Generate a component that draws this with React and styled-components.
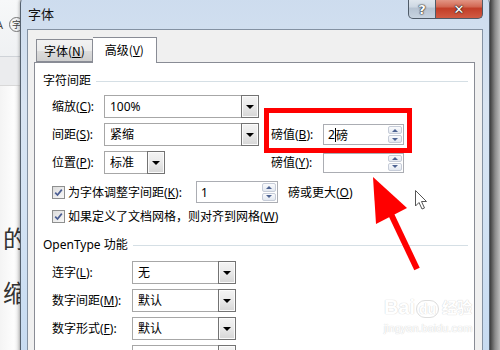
import styled, { createGlobalStyle } from "styled-components";

const GlobalStyle = createGlobalStyle`
  html, body { margin: 0; padding: 0; }
  body {
    width: 500px;
    height: 350px;
    overflow: hidden;
    background: #fff;
    font-family: "Noto Sans", "Noto Sans CJK SC", sans-serif;
    font-size: 12px;
    color: #000;
  }
`;

const Screen = styled.div`
  position: relative;
  display: flex;
  width: 500px;
  height: 350px;
  overflow: hidden;
`;

/* document behind the dialog */
const DocEdge = styled.div`
  width: 20px;
  flex: none;
  display: flex;
  flex-direction: column;
  background: #fafafa;
  overflow: hidden;
`;

const Ribbon = styled.div`
  height: 57px;
  flex: none;
  box-sizing: border-box;
  background: linear-gradient(#f7f8f9, #eff1f3);
  border-bottom: 1px solid #cfd3d8;
  display: flex;
  align-items: center;
  gap: 6px;
  padding: 0 0 8px 0;
  color: #444;
`;

const RibbonA = styled.span`
  margin-left: -4px;
  font-size: 11px;
`;

const RibbonCircle = styled.span`
  width: 13px;
  height: 13px;
  flex: none;
  border: 1px solid #777;
  border-radius: 50%;
  font-size: 9px;
  line-height: 13px;
  text-align: center;
`;

const RibbonBand = styled.div`
  height: 28px;
  flex: none;
  background: #ebecee;
  border-bottom: 1px solid #d8d8d8;
`;

const DocBody = styled.div`
  flex: 1;
  padding-top: 140px;
  display: flex;
  flex-direction: column;
  gap: 30px;
  background: linear-gradient(90deg, #f4f4f4, #fdfdfd 70%, #e6e6e6);
`;

const DocGlyph = styled.span`
  margin-left: 3px;
  font-family: "Noto Sans CJK SC", sans-serif;
  font-size: 24px;
  line-height: 24px;
  color: #333;
  white-space: nowrap;
`;

/* dialog window */
const Dialog = styled.div`
  width: 470px;
  flex: none;
  box-sizing: border-box;
  margin-top: -4px;
  height: 360px;
  display: flex;
  flex-direction: column;
  padding: 0 6px;
  border: 1px solid #55616f;
  border-radius: 7px 7px 0 0;
  background: linear-gradient(180deg, #cddcee 0%, #d8e4f2 30%, #d3e3f4 60%, #c7dbf1 100%);
  box-shadow: -1px 0 3px rgba(0, 0, 0, 0.25);
`;

const TitleBar = styled.div`
  height: 32px;
  flex: none;
  display: flex;
  align-items: flex-start;
`;

const Title = styled.span`
  margin: 9px 0 0 1px;
  font-family: "Noto Sans CJK SC", sans-serif;
  font-size: 13px;
  line-height: 16px;
  color: #111;
`;

const CaptionButtons = styled.div`
  margin-left: auto;
  display: flex;
`;

const CaptionBtn = styled.div`
  width: ${(p) => p.$w}px;
  height: 22px;
  box-sizing: border-box;
  border: 1px solid #4f5b68;
  border-top: none;
  display: flex;
  align-items: center;
  justify-content: center;
  padding-top: 3px;
  color: #fff;
  font-family: "DejaVu Sans", sans-serif;
  font-weight: bold;
  font-size: ${(p) => p.$fs}px;
  text-shadow: 0 0 1px #222, 0 0 1px #222, 0 0 2px #333;
  background: ${(p) =>
    p.$close
      ? "linear-gradient(#e9a99a 0%, #d36a55 45%, #c23e28 55%, #d15b43 100%)"
      : "linear-gradient(#e6ecf2 0%, #cfd9e4 45%, #b6c3d2 55%, #c7d3e0 100%)"};
  border-radius: ${(p) => (p.$close ? "0 0 5px 0" : "0 0 0 5px")};
  border-left: ${(p) => (p.$close ? "none" : "1px solid #4f5b68")};
`;

const Client = styled.div`
  flex: 1;
  display: flex;
  flex-direction: column;
  background: #f0f0f0;
  border: 1px solid #8391a2;
  border-bottom: none;
  padding: 8px 7px 0 6px;
  min-height: 0;
`;

const TabRow = styled.div`
  display: flex;
  align-items: flex-end;
  padding-left: 2px;
  height: 24px;
  flex: none;
`;

const Tab = styled.div`
  box-sizing: border-box;
  height: ${(p) => (p.$active ? 26 : 23)}px;
  padding: 0 ${(p) => (p.$active ? 12 : 7)}px;
  margin-bottom: ${(p) => (p.$active ? -1 : 0)}px;
  border: 1px solid #898c95;
  border-bottom: ${(p) => (p.$active ? "none" : "1px solid #898c95")};
  border-left: ${(p) => (p.$active ? "none" : "1px solid #898c95")};
  background: ${(p) =>
    p.$active ? "#fff" : "linear-gradient(#f2f2f2 0%, #ebebeb 50%, #dddddd 51%, #cfcfcf 100%)"};
  font-family: "Noto Sans CJK SC", sans-serif;
  font-size: 12px;
  line-height: ${(p) => (p.$active ? 24 : 21)}px;
  position: relative;
  z-index: ${(p) => (p.$active ? 1 : 0)};
`;

const Panel = styled.div`
  flex: 1;
  background: #fff;
  border: 1px solid #898c95;
  border-bottom: none;
  padding: 10px 6px 0 8px;
`;

const GroupHead = styled.div`
  display: flex;
  align-items: center;
  gap: 5px;
  line-height: 16px;
  margin-top: ${(p) => p.$mt || 0}px;
  &::after {
    content: "";
    flex: 1;
    height: 1px;
    background: #d5dfe5;
  }
`;

const GroupBody = styled.div`
  padding-left: 9px;
`;

const FieldGrid = styled.div`
  display: grid;
  grid-template-columns: ${(p) => p.$cols};
  grid-auto-rows: 23px;
  row-gap: 5px;
  align-items: center;
  margin-top: ${(p) => p.$mt}px;
`;

const Label = styled.span`
  white-space: nowrap;
  line-height: 16px;
  grid-column: ${(p) => p.$col || "auto"};
`;

const Combo = styled.div`
  width: ${(p) => p.$w}px;
  height: 23px;
  box-sizing: border-box;
  display: flex;
  border: 1px solid #a7a7a7;
  background: #fff;
`;

const ComboValue = styled.span`
  flex: 1;
  padding-left: 5px;
  line-height: 21px;
  white-space: nowrap;
`;

const DropBtn = styled.span`
  width: 18px;
  box-sizing: border-box;
  margin: -1px -1px -1px 0;
  border: 1px solid #737373;
  box-shadow: inset 0 0 0 1px #fbfbfb;
  background: linear-gradient(#f4f4f4 0%, #e9e9e9 50%, #d6d6d6 100%);
  display: flex;
  align-items: center;
  justify-content: center;
  &::after {
    content: "";
    border-left: 4px solid transparent;
    border-right: 4px solid transparent;
    border-top: 4px solid #000;
    margin-top: 1px;
  }
`;

const Spin = styled.div`
  width: ${(p) => p.$w}px;
  height: ${(p) => p.$h}px;
  box-sizing: border-box;
  border: 1px solid #abadb3;
  background: #fff;
  display: flex;
  align-items: stretch;
  padding: 1px 1px 1px 4px;
  grid-column: ${(p) => p.$col || "auto"};
`;

const SpinValue = styled.span`
  flex: 1;
  display: flex;
  align-items: center;
  white-space: nowrap;
`;

const Caret = styled.span`
  width: 1px;
  height: 14px;
  background: #000;
`;

const SpinButtons = styled.div`
  width: 14px;
  display: flex;
  flex-direction: column;
  gap: 1px;
`;

const SpinBtn = styled.span`
  flex: 1;
  border: 1px solid #c6ccd8;
  border-radius: 2px;
  background: linear-gradient(#fafbfd, #e3e8f0);
  display: flex;
  align-items: center;
  justify-content: center;
  &::after {
    content: "";
    border-left: 3px solid transparent;
    border-right: 3px solid transparent;
    ${(p) => (p.$down ? "border-top: 3px solid #4d6392;" : "border-bottom: 3px solid #4d6392;")}
  }
`;

const CheckRow = styled.div`
  display: flex;
  align-items: center;
  height: ${(p) => p.$h}px;
  margin-top: ${(p) => p.$mt}px;
`;

const CheckBox = styled.span`
  width: 13px;
  height: 13px;
  flex: none;
  box-sizing: border-box;
  border: 1px solid #8e8f8f;
  background: linear-gradient(135deg, #dcdcdc, #f8f8f8);
  display: flex;
  align-items: center;
  justify-content: center;
  margin-right: 3px;
`;

const CheckLabel = styled.span`
  white-space: nowrap;
  width: ${(p) => (p.$w ? `${p.$w}px` : "auto")};
`;

const Suffix = styled.span`
  margin-left: 10px;
  white-space: nowrap;
`;

const RightShade = styled.div`
  width: 10px;
  flex: none;
  background: linear-gradient(90deg, #3e3e3e, #8a8a8a 50%, #bdbdbd);
`;

/* annotations over the screenshot */
const Highlight = styled.div`
  position: absolute;
  left: 264px;
  top: 108px;
  width: 148px;
  height: 45px;
  box-sizing: border-box;
  border: 5px solid #ff0000;
`;

const Overlay = styled.svg`
  position: absolute;
  left: 0;
  top: 0;
  pointer-events: none;
`;

const Watermark = styled.div`
  position: absolute;
  left: 383px;
  top: 296px;
  width: 90px;
  display: flex;
  flex-direction: column;
  align-items: center;
  color: #fff;
  text-shadow: 0 0 1px #d6d6d6, 0 0 1px #d6d6d6;
  font-family: "Liberation Sans", sans-serif;
`;

const MarkLine = styled.div`
  display: flex;
  align-items: flex-end;
  font-size: 20px;
  font-weight: bold;
  line-height: 22px;
  gap: 1px;
`;

const MarkDu = styled.span`
  font-size: 14px;
  border: 1px solid #ddd;
  border-radius: 9px;
  padding: 0 2px;
  line-height: 16px;
`;

const MarkCn = styled.span`
  font-family: "Noto Sans CJK SC", sans-serif;
  font-size: 15px;
  margin-left: 2px;
`;

const MarkUrl = styled.div`
  font-size: 11px;
  line-height: 14px;
  margin-top: 3px;
`;

function Dropdown({ w, value }) {
  return (
    <Combo $w={w}>
      <ComboValue>{value}</ComboValue>
      <DropBtn />
    </Combo>
  );
}

function SpinField({ w, h, col, children }) {
  return (
    <Spin $w={w} $h={h} $col={col}>
      <SpinValue>{children}</SpinValue>
      <SpinButtons>
        <SpinBtn />
        <SpinBtn $down />
      </SpinButtons>
    </Spin>
  );
}

function Check() {
  return (
    <CheckBox>
      <svg width="9" height="9" viewBox="0 0 9 9">
        <path d="M1.2 4.6 L3.5 7 L7.8 1.6" fill="none" stroke="#4a5d93" strokeWidth="1.7" />
      </svg>
    </CheckBox>
  );
}

export default function App() {
  return (
    <>
      <GlobalStyle />
      <Screen>
        <DocEdge>
          <Ribbon>
            <RibbonA>A</RibbonA>
            <RibbonCircle>字</RibbonCircle>
          </Ribbon>
          <RibbonBand />
          <DocBody>
            <DocGlyph>的</DocGlyph>
            <DocGlyph>缩</DocGlyph>
          </DocBody>
        </DocEdge>

        <Dialog>
          <TitleBar>
            <Title>字体</Title>
            <CaptionButtons>
              <CaptionBtn $w={28} $fs={13}>?</CaptionBtn>
              <CaptionBtn $w={47} $fs={13} $close>✕</CaptionBtn>
            </CaptionButtons>
          </TitleBar>
          <Client>
            <TabRow>
              <Tab>
                字体(<u>N</u>)
              </Tab>
              <Tab $active>
                高级(<u>V</u>)
              </Tab>
            </TabRow>
            <Panel>
              <GroupHead>字符间距</GroupHead>
              <GroupBody>
                <FieldGrid $cols="52px 155px 12px 52px 81px" $mt={6}>
                  <Label>
                    缩放(<u>C</u>):
                  </Label>
                  <Dropdown w={155} value="100%" />
                  <span />
                  <span />
                  <span />
                  <Label>
                    间距(<u>S</u>):
                  </Label>
                  <Dropdown w={155} value="紧缩" />
                  <Label $col="4">
                    磅值(<u>B</u>):
                  </Label>
                  <SpinField w={81} h={21} col="5">
                    2<Caret />磅
                  </SpinField>
                  <Label>
                    位置(<u>P</u>):
                  </Label>
                  <Dropdown w={61} value="标准" />
                  <Label $col="4">
                    磅值(<u>Y</u>):
                  </Label>
                  <SpinField w={81} h={20} col="5" />
                </FieldGrid>
                <CheckRow $h={22} $mt={7}>
                  <Check />
                  <CheckLabel $w={128}>
                    为字体调整字间距(<u>K</u>):
                  </CheckLabel>
                  <SpinField w={82} h={22}>1</SpinField>
                  <Suffix>
                    磅或更大(<u>O</u>)
                  </Suffix>
                </CheckRow>
                <CheckRow $h={16} $mt={5}>
                  <Check />
                  <CheckLabel>
                    如果定义了文档网格，则对齐到网格(<u>W</u>)
                  </CheckLabel>
                </CheckRow>
              </GroupBody>
              <GroupHead $mt={13}>OpenType 功能</GroupHead>
              <GroupBody>
                <FieldGrid $cols="80px 104px" $mt={8}>
                  <Label>
                    连字(<u>L</u>):
                  </Label>
                  <Dropdown w={104} value="无" />
                  <Label>
                    数字间距(<u>M</u>):
                  </Label>
                  <Dropdown w={104} value="默认" />
                  <Label>
                    数字形式(<u>F</u>):
                  </Label>
                  <Dropdown w={104} value="默认" />
                  <Label>
                    样式集(<u>T</u>):
                  </Label>
                  <Dropdown w={104} value="默认" />
                </FieldGrid>
              </GroupBody>
            </Panel>
          </Client>
        </Dialog>

        <RightShade />

        <Watermark>
          <MarkLine>
            Bai<MarkDu>du</MarkDu>
            <MarkCn>经验</MarkCn>
          </MarkLine>
          <MarkUrl>jingyan.baidu.com</MarkUrl>
        </Watermark>

        <Highlight />

        <Overlay width="500" height="350" viewBox="0 0 500 350">
          <polygon points="373,177 376,224 407,208" fill="#ff0000" />
          <line x1="390" y1="212" x2="417" y2="269" stroke="#ff0000" strokeWidth="6" />
          <path
            d="M415.5 190.5 L415.5 206 L419 202.5 L422 209 L424.5 208 L421.5 201.5 L426.5 201.5 Z"
            fill="#fff"
            stroke="#555"
            strokeWidth="1"
            strokeLinejoin="round"
          />
        </Overlay>
      </Screen>
    </>
  );
}
